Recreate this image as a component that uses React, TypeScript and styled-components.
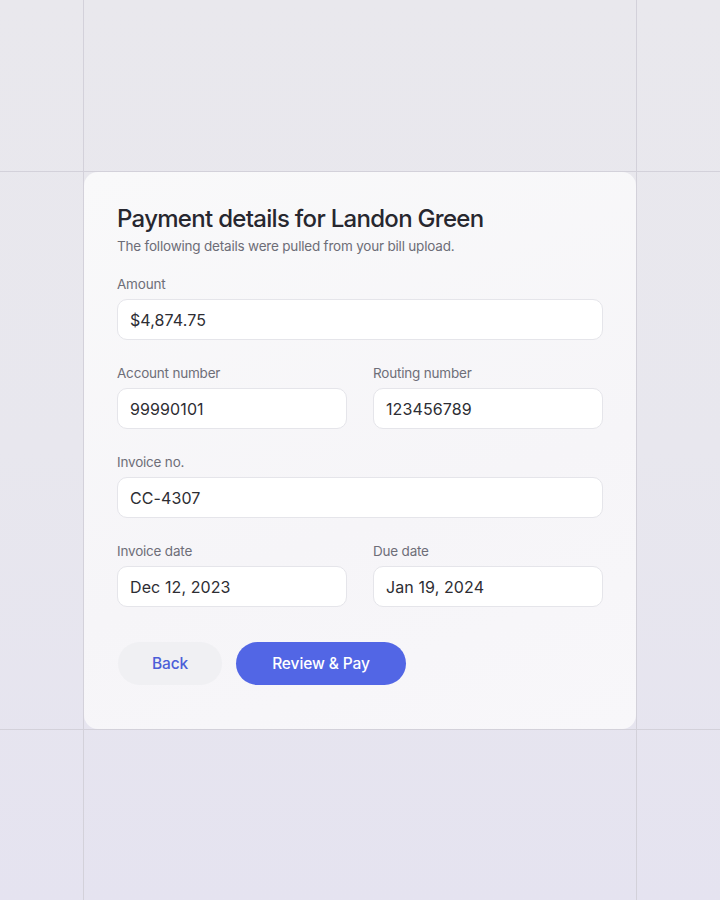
import React from "react";
import styled, { createGlobalStyle } from "styled-components";

const Global = createGlobalStyle`
  html, body { margin: 0; padding: 0; }
  body { font-family: Inter, "Open Sans", sans-serif; -webkit-font-smoothing: antialiased; }
`;

const Page = styled.div`
  position: relative;
  width: 720px;
  height: 900px;
  box-sizing: border-box;
  padding: 172px 0 0 84px;
  background:
    linear-gradient(to right, transparent 83px, #d3d1da 83px, #d3d1da 84px, transparent 84px),
    linear-gradient(to right, transparent 636px, #d3d1da 636px, #d3d1da 637px, transparent 637px),
    linear-gradient(to bottom, transparent 171px, #d3d1da 171px, #d3d1da 172px, transparent 172px),
    linear-gradient(to bottom, transparent 729px, #d3d1da 729px, #d3d1da 730px, transparent 730px),
    linear-gradient(to bottom, #e9e8ed 0%, #e8e7ee 50%, #e5e3f0 100%);
`;

const Card = styled.div`
  width: 552px;
  height: 557px;
  box-sizing: border-box;
  padding: 31px 33px 0 33px;
  background: linear-gradient(160deg, #f9f9fa 0%, #f6f5f8 60%, #f8f7fa 100%);
  border-radius: 14px;
  display: flex;
  flex-direction: column;
`;

const Title = styled.h1`
  margin: 0;
  font-size: 24px;
  line-height: 32px;
  font-weight: 500;
  color: #27272f;
  letter-spacing: -0.7px;
`;

const Subtitle = styled.p`
  margin: 1px 0 18px 0;
  font-size: 13.5px;
  line-height: 20px;
  color: #6d6d77;
  letter-spacing: -0.2px;
`;

const Fields = styled.div`
  display: flex;
  flex-direction: column;
  gap: 23px;
`;

const Row = styled.div`
  display: grid;
  grid-template-columns: 1fr 1fr;
  gap: 26px;
`;

const Field = styled.div`
  display: flex;
  flex-direction: column;
  gap: 5px;
`;

const Label = styled.label`
  font-size: 13.5px;
  line-height: 20px;
  color: #6e6e78;
  letter-spacing: -0.2px;
`;

const Input = styled.div`
  height: 41px;
  box-sizing: border-box;
  border: 1px solid #e5e5ea;
  border-radius: 10px;
  background: #ffffff;
  display: flex;
  align-items: center;
  padding: 0 12px;
  font-size: 16px;
  color: #2d2d33;
  letter-spacing: 0.1px;
`;

const Actions = styled.div`
  display: flex;
  gap: 14px;
  margin-top: 35px;
  padding-left: 1px;
`;

const Button = styled.button<{ $primary?: boolean }>`
  height: 43px;
  border: none;
  border-radius: 22px;
  font-family: inherit;
  font-size: 15.5px;
  font-weight: 500;
  letter-spacing: -0.1px;
  cursor: pointer;
  width: ${(p) => (p.$primary ? "170px" : "104px")};
  background: ${(p) => (p.$primary ? "#5266e5" : "#f0f0f3")};
  color: ${(p) => (p.$primary ? "#ffffff" : "#4b5ed8")};
`;

const FieldBox = ({ label, value }: { label: string; value: string }) => (
  <Field>
    <Label>{label}</Label>
    <Input>{value}</Input>
  </Field>
);

export default function App() {
  return (
    <>
      <Global />
      <Page>
        <Card>
          <Title>Payment details for Landon Green</Title>
          <Subtitle>The following details were pulled from your bill upload.</Subtitle>
          <Fields>
            <FieldBox label="Amount" value="$4,874.75" />
            <Row>
              <FieldBox label="Account number" value="99990101" />
              <FieldBox label="Routing number" value="123456789" />
            </Row>
            <FieldBox label="Invoice no." value="CC-4307" />
            <Row>
              <FieldBox label="Invoice date" value="Dec 12, 2023" />
              <FieldBox label="Due date" value="Jan 19, 2024" />
            </Row>
          </Fields>
          <Actions>
            <Button>Back</Button>
            <Button $primary>Review &amp; Pay</Button>
          </Actions>
        </Card>
      </Page>
    </>
  );
}
